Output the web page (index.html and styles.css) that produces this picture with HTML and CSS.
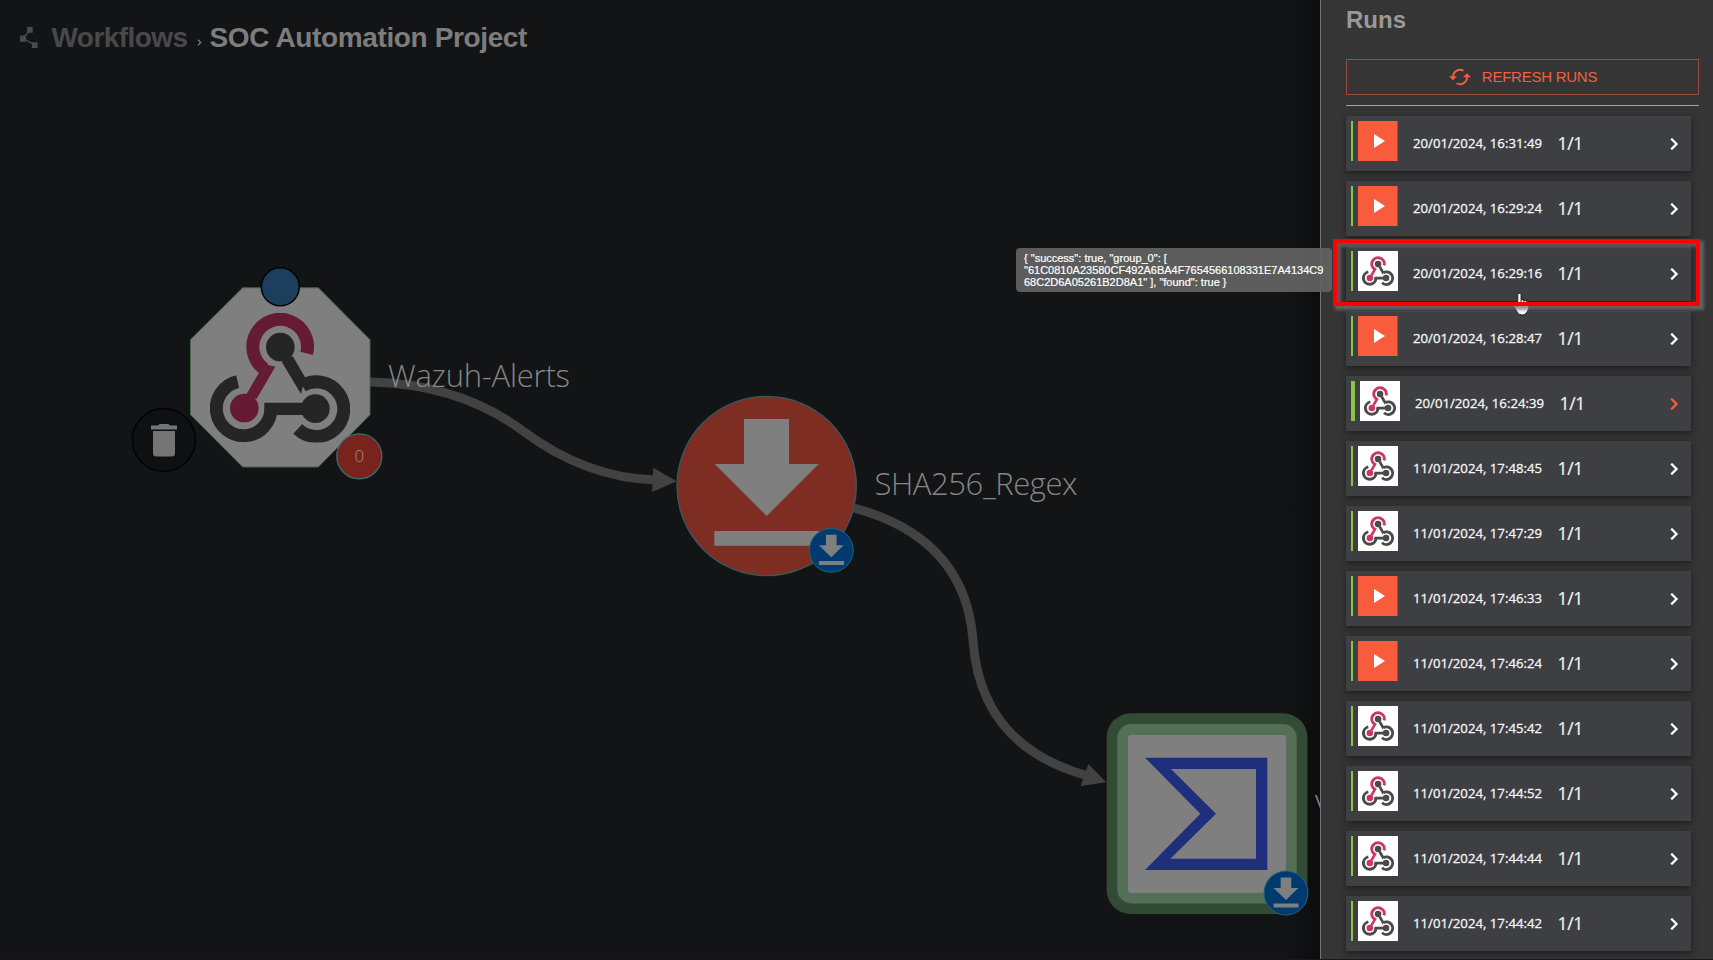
FILE: index.html
```html
<!DOCTYPE html>
<html lang="en">
<head>
<meta charset="utf-8">
<title>SOC Automation Project</title>
<link rel="stylesheet" href="styles.css">
</head>
<body>
<svg class="defs" aria-hidden="true">
  <symbol id="hook" viewBox="300 188 420 390">
    <g fill="none" stroke-width="39">
      <path class="hook-pink-line" d="M590 310A82 82 0 1 0 463 357"/>
      <path class="hook-gray-line" d="M383 395A82 82 0 1 0 483 475"/>
      <path class="hook-gray-line" d="M563 537A82 82 0 1 0 577 407"/>
    </g>
    <path class="hook-pink" d="M447 368L455 340L496 350L440 446L405 440Z"/>
    <circle class="hook-pink" cx="403" cy="474" r="43"/>
    <path class="hook-gray" d="M515 335L548 318L585 382L573 432ZM463 458H600V495H463Z"/>
    <circle class="hook-gray" cx="511" cy="291" r="43"/>
    <circle class="hook-gray" cx="616" cy="476" r="43"/>
  </symbol>
  <symbol id="play" viewBox="0 0 24 24"><path d="M8 5v14l11-7z" fill="currentColor"/></symbol>
  <symbol id="chev" viewBox="0 0 24 24"><path d="M10 6L8.59 7.41 13.17 12l-4.58 4.59L10 18l6-6z" fill="currentColor" stroke="currentColor" stroke-width=".3"/></symbol>
  <symbol id="down" viewBox="-23 -23 46 46">
    <circle r="22" class="badge"/>
    <path class="pale" d="M-5.3-15.6H5.3V-5H12.4L0 7-12.4-5H-5.3ZM-12.4 10.6H12.6V14.6H-12.4Z"/>
  </symbol>
</svg>

<div class="app">
  <main class="stage">
    <header class="crumbs">
      <svg class="crumb-icon" viewBox="0 0 17 20"><path d="M9.5 2.5L3 11l11 6" fill="none" stroke="currentColor" stroke-width="1.4"/><path d="M6.700 0h5.300v5.500H6.700zM0 8h5.500v6H0zM11.300 14.500H16.700V20H11.300z" fill="currentColor"/></svg>
      <span class="crumb-parent">Workflows</span>
      <svg class="crumb-sep" viewBox="0 0 5 7"><path d="M1 .8L3.700 3.500 1 6.200" fill="none" stroke="currentColor" stroke-width="1.3"/></svg>
      <h1 class="crumb-title">SOC Automation Project</h1>
    </header>

    <svg class="graph" viewBox="0 0 1320 960">
      <g class="edge">
        <path d="M370 382Q460 384 523 431Q586 478 656 480"/>
        <path d="M854 508Q965 538 973 640Q980 745 1085 775"/>
      </g>
      <path class="arrow" d="M653.300 467.700L652 492L676.700 481.300ZM1088.300 764L1080.700 786L1106.300 782.300Z"/>

      <path class="octagon" d="M242.700 287.800H318.300L370 339.700V414.700L318.300 467H242.700L190.500 414.700V339.700Z"/>
      <svg class="dimmed" x="210" y="312.700" width="140" height="130"><use href="#hook"/></svg>
      <circle class="port" cx="280.300" cy="286.800" r="19"/>
      <circle class="trash-ring" cx="163.800" cy="440" r="31.500"/>
      <path class="trash" d="M151 425.500H158L159.500 424H168.500L170 425.500H177V429.500H151ZM153 431H175V453Q175 456.500 171.500 456.500H156.500Q153 456.500 153 453Z"/>
      <circle class="count" cx="359.300" cy="456.300" r="22.500"/>
      <text class="count-text" x="359.300" y="462" text-anchor="middle">0</text>
      <text class="label" x="388" y="386.500" textLength="182">Wazuh-Alerts</text>

      <circle class="regex" cx="766.700" cy="486" r="89.700"/>
      <path class="pale" d="M744 419H789V464H818.700L766.700 516L714.700 464H744ZM714.300 531H819V545.700H714.300Z"/>
      <svg x="808.300" y="527.300" width="46" height="46"><use href="#down"/></svg>
      <text class="label" x="874.500" y="495" textLength="203">SHA256_Regex</text>

      <rect class="vt-outer" x="1106.700" y="713.300" width="200.700" height="200.700" rx="24"/>
      <rect class="vt-mid" x="1117.300" y="724" width="179.400" height="179.400" rx="14"/>
      <rect class="pale" x="1128" y="735" width="158" height="158" rx="3"/>
      <path class="sigma" fill-rule="evenodd" transform="translate(1060 680) scale(.33333)" d="M255 233H622V570H255L421 401ZM333 267H588V536H331L468 401Z"/>
      <svg x="1263" y="870" width="46" height="46"><use href="#down"/></svg>
      <text class="label" x="1315" y="817">V</text>
    </svg>
  </main>

  <aside class="drawer">
    <h2 class="drawer-title">Runs</h2>
    <button class="refresh">
      <svg class="refresh-icon" viewBox="0 0 22 18"><g fill="none" stroke="currentColor" stroke-width="1.900"><path d="M4 9A7 7 0 0 1 14.500 2.800"/><path d="M18 9A7 7 0 0 1 7.500 15.200"/></g><path d="M0 8.300H8L4 12.300ZM14 9.200H22L18 5.200Z" fill="currentColor"/></svg>
      <span>REFRESH RUNS</span>
    </button>
    <ul class="runs">
      <li class="run"><i class="bar"></i><span class="pic play"><svg><use href="#play"/></svg></span><span class="date">20/01/2024, 16:31:49</span><span class="ratio">1/1</span><svg class="chev"><use href="#chev"/></svg></li>
      <li class="run"><i class="bar"></i><span class="pic play"><svg><use href="#play"/></svg></span><span class="date">20/01/2024, 16:29:24</span><span class="ratio">1/1</span><svg class="chev"><use href="#chev"/></svg></li>
      <li class="run"><i class="bar"></i><span class="pic hook"><svg><use href="#hook"/></svg></span><span class="date">20/01/2024, 16:29:16</span><span class="ratio">1/1</span><svg class="chev"><use href="#chev"/></svg></li>
      <li class="run"><i class="bar"></i><span class="pic play"><svg><use href="#play"/></svg></span><span class="date">20/01/2024, 16:28:47</span><span class="ratio">1/1</span><svg class="chev"><use href="#chev"/></svg></li>
      <li class="run selected"><i class="bar"></i><span class="pic hook"><svg><use href="#hook"/></svg></span><span class="date">20/01/2024, 16:24:39</span><span class="ratio">1/1</span><svg class="chev"><use href="#chev"/></svg></li>
      <li class="run"><i class="bar"></i><span class="pic hook"><svg><use href="#hook"/></svg></span><span class="date">11/01/2024, 17:48:45</span><span class="ratio">1/1</span><svg class="chev"><use href="#chev"/></svg></li>
      <li class="run"><i class="bar"></i><span class="pic hook"><svg><use href="#hook"/></svg></span><span class="date">11/01/2024, 17:47:29</span><span class="ratio">1/1</span><svg class="chev"><use href="#chev"/></svg></li>
      <li class="run"><i class="bar"></i><span class="pic play"><svg><use href="#play"/></svg></span><span class="date">11/01/2024, 17:46:33</span><span class="ratio">1/1</span><svg class="chev"><use href="#chev"/></svg></li>
      <li class="run"><i class="bar"></i><span class="pic play"><svg><use href="#play"/></svg></span><span class="date">11/01/2024, 17:46:24</span><span class="ratio">1/1</span><svg class="chev"><use href="#chev"/></svg></li>
      <li class="run"><i class="bar"></i><span class="pic hook"><svg><use href="#hook"/></svg></span><span class="date">11/01/2024, 17:45:42</span><span class="ratio">1/1</span><svg class="chev"><use href="#chev"/></svg></li>
      <li class="run"><i class="bar"></i><span class="pic hook"><svg><use href="#hook"/></svg></span><span class="date">11/01/2024, 17:44:52</span><span class="ratio">1/1</span><svg class="chev"><use href="#chev"/></svg></li>
      <li class="run"><i class="bar"></i><span class="pic hook"><svg><use href="#hook"/></svg></span><span class="date">11/01/2024, 17:44:44</span><span class="ratio">1/1</span><svg class="chev"><use href="#chev"/></svg></li>
      <li class="run"><i class="bar"></i><span class="pic hook"><svg><use href="#hook"/></svg></span><span class="date">11/01/2024, 17:44:42</span><span class="ratio">1/1</span><svg class="chev"><use href="#chev"/></svg></li>
    </ul>
  </aside>

  <div class="tooltip">{ "success": true, "group_0": [<br>"61C0810A23580CF492A6BA4F7654566108331E7A4134C9<br>68C2D6A05261B2D8A1" ], "found": true }</div>
  <svg class="cursor" viewBox="0 0 17 24"><path d="M5.500 1.500Q7.500.5 8 2.500V7.500L14 9Q16.500 9.500 16.300 12.500Q16 18 14 20Q12.500 23 9.500 23Q6 23 4.500 20.500L1.500 15.500Q0 13.500 1.500 12.500Q3 12 4.800 14.500V2.500Q4.800 1.800 5.500 1.500Z" fill="#fff" stroke="#15172b" stroke-width=".9"/><path d="M8 7.500V12M10.800 8.500V12M13.500 9.200V12.500" stroke="#15172b" stroke-width=".9"/></svg>
  <div class="marker"></div>
</div>
</body>
</html>
```

FILE: styles.css
```css
* { box-sizing: border-box; }

body {
  margin: 0;
  background: #131416;
  font-family: "Liberation Sans", Arial, sans-serif;
  overflow: hidden;
}

.defs { position: absolute; width: 0; height: 0; }

.app {
  position: relative;
  display: flex;
  width: 1713px;
  height: 960px;
  overflow: hidden;
}

.app::after {
  content: "";
  position: absolute;
  left: 0;
  right: 0;
  bottom: 0;
  height: 1px;
  background: #1d1519;
}

.stage {
  position: relative;
  width: 1320px;
  height: 960px;
  background: linear-gradient(to right, #131416 1285px, #0b0c0e 1320px);
}

.crumbs {
  display: flex;
  align-items: center;
  height: 76px;
  padding-left: 20px;
  font-size: 28px;
  font-weight: 700;
  white-space: nowrap;
}

.crumbs > * { flex: none; }
.crumb-icon { width: 18px; height: 21px; margin: -1px 13.500px 0 0; color: #4b4b4c; }
.crumb-parent { width: 137px; color: #48494b; letter-spacing: -0.55px; }
.crumb-sep { width: 5px; height: 7px; margin: 8px 7.500px 0 8.500px; color: #7b7b7b; }
.crumb-title { margin: 0; font-size: 28px; color: #7d7d7d; letter-spacing: -0.37px; }

.graph { position: absolute; inset: 0; width: 1320px; height: 960px; overflow: hidden; }

.hook-pink { fill: #cb3568; }
.hook-gray { fill: #4a4a4a; }
.hook-pink-line { stroke: #cb3568; }
.hook-gray-line { stroke: #4a4a4a; }

.edge { fill: none; stroke: #424242; stroke-width: 9; }
.arrow { fill: #424242; }
.pale { fill: #7f7f7f; }
.octagon { fill: #7f7f7f; stroke: #44664a; stroke-width: 1; }
.dimmed { filter: brightness(0.5); }
.port { fill: #1c3f5e; stroke: #020303; stroke-width: 1.5; }
.trash-ring { fill: #0f1012; stroke: #020202; stroke-width: 1.5; }
.trash { fill: #747474; }
.count { fill: #78231c; stroke: #3f6b74; stroke-width: 1.3; }
.count-text { fill: #a58b89; font: 300 17px "Open Sans", "Noto Sans", sans-serif; }
.label { fill: #868686; font: 300 31px "Open Sans", "Noto Sans", sans-serif; }
.regex { fill: #7d2d22; stroke: #375961; stroke-width: 1.3; }
.badge { fill: #003a6e; stroke: #1c6776; stroke-width: 1; }
.vt-outer { fill: #334b35; }
.vt-mid { fill: #536f55; }
.sigma { fill: #1f2f7c; }

.drawer {
  position: relative;
  width: 393px;
  height: 960px;
  padding: 0 14px 0 25px;
  background: #353535;
  border-left: 1px solid #747474;
}

.drawer-title {
  height: 59px;
  margin: 0;
  padding-top: 8px;
  font-size: 24px;
  line-height: 24px;
  color: #999;
}

.refresh {
  display: flex;
  align-items: center;
  justify-content: center;
  gap: 11px;
  width: 353px;
  height: 36px;
  padding: 0 0 2px 1px;
  border: 1px solid #9a4c3b;
  background: none;
  color: #f1603f;
  font: 15px "Liberation Sans", Arial, sans-serif;
  letter-spacing: -0.25px;
}

.refresh-icon { width: 22px; height: 18px; margin-top: 2px; }

.runs {
  display: flex;
  flex-direction: column;
  gap: 10px;
  margin: 10px 0 0;
  padding: 10px 0 0;
  border-top: 1px solid #a5a5a5;
  list-style: none;
}

.run {
  display: flex;
  width: 345px;
  height: 55px;
  flex: none;
  padding: 5px;
  background: #3e3f43;
  box-shadow: 0 2px 4px rgba(0, 0, 0, 0.25), 0 3px 9px rgba(0, 0, 0, 0.22);
  color: #f5f5f5;
  font-family: "Open Sans", "Noto Sans", sans-serif;
  white-space: nowrap;
}

.bar { width: 2px; height: 40px; margin-right: 5px; background: #88c440; }
.selected .bar { width: 4px; }

.pic { display: flex; width: 40px; height: 40px; margin-right: 15px; }
.pic.play { align-items: center; justify-content: center; background: #f95c3c; border-right: 1px solid #b5462f; color: #fff; }
.pic.play svg { width: 24px; height: 24px; }
.pic.hook { align-items: center; justify-content: center; background: #fff; }
.pic.hook svg { width: 32px; height: 30px; }

.date { width: 144.500px; font-size: 13.200px; line-height: 45px; -webkit-text-stroke: 0.3px #f5f5f5; }
.ratio { font-size: 17.500px; line-height: 45px; letter-spacing: -0.3px; -webkit-text-stroke: 0.2px #f5f5f5; }

.chev { width: 24px; height: 24px; margin: 11px 0 0 auto; color: #fff; }
.selected .chev { color: #f95c3c; }

.tooltip {
  position: absolute;
  left: 1016px;
  top: 248px;
  width: 316px;
  height: 44px;
  padding: 4px 8px;
  border-radius: 4px;
  background: rgba(97, 97, 97, 0.94);
  color: #fff;
  font-size: 11px;
  line-height: 12px;
  -webkit-text-stroke: 0.2px #fff;
  white-space: nowrap;
}

.marker {
  position: absolute;
  left: 1333px;
  top: 239px;
  width: 367px;
  height: 67px;
  border: 4px solid #fe0000;
  box-shadow: 3px 3px 3px 1px rgba(115, 115, 115, 0.75), inset 3px 3px 3px 1px rgba(115, 115, 115, 0.6);
}

.cursor { position: absolute; left: 1513px; top: 292px; width: 17px; height: 24px; }
```
